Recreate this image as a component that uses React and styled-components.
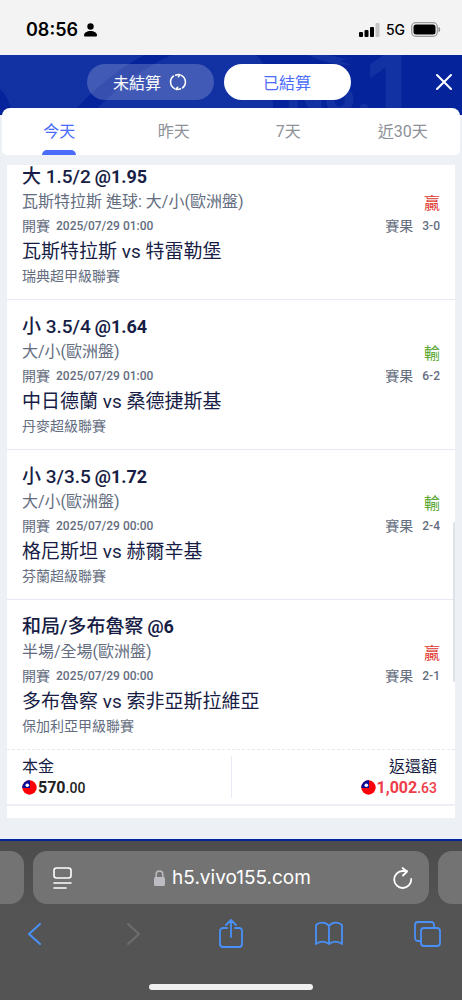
import { useState } from "react";
import styled, { createGlobalStyle } from "styled-components";

const GlobalStyle = createGlobalStyle`
  * {
    box-sizing: border-box;
  }
  body {
    margin: 0;
    background: #545454;
    font-family: Roboto, "Noto Sans CJK TC", sans-serif;
    color: #171d45;
  }
  button {
    border: none;
    padding: 0;
    background: none;
    font-family: inherit;
    cursor: pointer;
  }
`;

const Page = styled.div`
  display: flex;
  flex-direction: column;
  min-height: 100vh;
`;

const StatusBar = styled.div`
  display: flex;
  justify-content: space-between;
  align-items: center;
  height: 55px;
  padding: 4px 21px 0 26px;
  background: #f3f3f3;
  color: #000;
  font-family: Inter, sans-serif;
`;

const Clock = styled.div`
  display: flex;
  align-items: center;
  gap: 6px;
  font-size: 18px;
  font-weight: 600;
`;

const Signal = styled.div`
  display: flex;
  align-items: center;
  gap: 6px;
  font-size: 14px;
  font-weight: 500;
`;

const Main = styled.main`
  background: #edf1f5;
  border-bottom: 2px solid #05249b;
`;

const Header = styled.header`
  position: relative;
  display: flex;
  align-items: center;
  height: 60px;
  padding: 0 9px 7px 2px;
  background: #05249b;
  overflow: hidden;
`;

const HeaderArt = styled.svg`
  position: absolute;
  top: 0;
  left: 0;
  width: 100%;
  height: 100%;
`;

const Pills = styled.div`
  position: relative;
  flex: 1;
  display: flex;
  justify-content: center;
  gap: 10px;
`;

const Pill = styled.button`
  display: flex;
  align-items: center;
  justify-content: center;
  gap: 8px;
  width: 127px;
  height: 36px;
  border-radius: 18px;
  font-size: 16px;
  color: ${({ $active }) => ($active ? "#4a6cfa" : "#fff")};
  background: ${({ $active }) => ($active ? "#fff" : "rgba(255, 255, 255, 0.2)")};
`;

const CloseButton = styled.button`
  position: relative;
  display: flex;
  color: #fff;
`;

const Tabs = styled.nav`
  position: relative;
  display: grid;
  grid-template-columns: repeat(4, 1fr);
  height: 47px;
  margin: -7px 2px 10px;
  border-radius: 8px 8px 5px 5px;
  background: #fff;
`;

const Tab = styled.button`
  display: flex;
  flex-direction: column;
  align-items: center;
  justify-content: space-between;
  padding-top: 12px;
  font-size: 16px;
  line-height: 24px;
  color: ${({ $active }) => ($active ? "#4a6cfa" : "#8d9198")};

  &::after {
    content: "";
    width: 34px;
    height: 5px;
    border-radius: 5px 5px 0 0;
    background: ${({ $active }) => ($active ? "#4a6cfa" : "transparent")};
  }
`;

const Panel = styled.section`
  position: relative;
  margin: 0 7px 21px;
  padding-bottom: 12px;
  background: #fff;
  overflow: hidden;
`;

const ScrollThumb = styled.div`
  position: absolute;
  top: 357px;
  right: 0;
  width: 2px;
  height: 160px;
  border-radius: 1px;
  background: #dfe3e9;
`;

// the list is scrolled, so the first bet starts above the panel edge
const BetList = styled.ul`
  margin: -15px 0 0;
  padding: 0;
  list-style: none;
`;

const Bet = styled.li`
  padding: 14px 15px 10px;
  border-bottom: 1px solid #e6e9f2;

  &:last-child {
    border-bottom: 1px dashed #e6e9f2;
  }
`;

const Line = styled.div`
  display: flex;
  justify-content: space-between;
  height: 25px;
  line-height: 25px;
  white-space: nowrap;
`;

const Pick = styled(Line)`
  justify-content: flex-start;
  gap: 4px;
  font-size: 19px;
  font-weight: 500;

  strong {
    font-size: 18px;
    font-weight: 700;
  }
`;

const Market = styled(Line)`
  font-size: 16px;
  color: #646d80;
`;

const Outcome = styled.span`
  padding-top: 2px;
  color: ${({ $won }) => ($won ? "#e0382f" : "#5aa832")};
`;

const Detail = styled(Line)`
  font-size: 14px;
  color: #646d80;
`;

const Field = styled.span`
  display: flex;
  gap: ${({ $wide }) => ($wide ? "9px" : "6px")};

  b {
    font-size: 12px;
    font-weight: 500;
  }
`;

const Match = styled(Line)`
  font-size: 19px;
`;

const League = styled(Line)`
  font-size: 14px;
  color: #646d80;
`;

const Totals = styled.div`
  display: grid;
  grid-template-columns: 1fr 1fr;
  padding: 6px 0;
  border-bottom: 2px solid #eeeff6;
`;

const Total = styled.div`
  display: flex;
  flex-direction: column;
  align-items: ${({ $end }) => ($end ? "flex-end" : "flex-start")};
  padding: 0 ${({ $end }) => ($end ? "18px" : "15px")};
  font-size: 16px;
  line-height: 21px;

  & + & {
    border-left: 1px solid #e9ebf4;
  }
`;

const Amount = styled.div`
  display: flex;
  align-items: center;
  gap: 1px;
  height: 21px;
  font-weight: 700;
  color: ${({ $red }) => ($red ? "#ee3c48" : "#222")};

  small {
    font-size: 14px;
    font-weight: 500;
  }
`;

const BrowserBar = styled.footer`
  flex: 1;
  display: flex;
  flex-direction: column;
  padding-top: 10px;
  background: linear-gradient(#4c4c4c, #545454 70px);
`;

const AddressRow = styled.div`
  display: flex;
  gap: 9px;
  height: 53px;
`;

const Stub = styled.div`
  width: 24px;
  background: #737373;
  border-radius: ${({ $right }) => ($right ? "14px 0 0 14px" : "0 14px 14px 0")};
`;

const Address = styled.div`
  flex: 1;
  display: flex;
  align-items: center;
  justify-content: space-between;
  padding: 0 16px 0 20px;
  border-radius: 14px;
  background: #737373;
  color: #fff;
`;

const Host = styled.div`
  display: flex;
  align-items: center;
  gap: 7px;
  font-family: Inter, sans-serif;
  font-size: 19px;
`;

const ReloadButton = styled.button`
  display: flex;
  color: #fff;
`;

const Toolbar = styled.div`
  display: flex;
  justify-content: space-between;
  padding: 14px 21px 0;
`;

const ToolButton = styled.button`
  display: flex;
  justify-content: center;
  width: 28px;
  height: 32px;
  color: ${({ disabled }) => (disabled ? "#6d6d6d" : "#4990f8")};
`;

const HomeIndicator = styled.div`
  width: 164px;
  height: 6px;
  margin: auto auto 10px;
  border-radius: 3px;
  background: #f0f0f0;
`;

const Stroke = ({ w, h, width = 2, children }) => (
  <svg
    width={w}
    height={h}
    viewBox={`0 0 ${w} ${h}`}
    fill="none"
    stroke="currentColor"
    strokeWidth={width}
    strokeLinecap="round"
    strokeLinejoin="round"
    aria-hidden="true"
  >
    {children}
  </svg>
);

const Flag = () => (
  <svg width="15" height="15" viewBox="0 0 15 15" aria-hidden="true">
    <circle cx="7.5" cy="7.5" r="7.2" fill="#fb0007" />
    <path d="M8 .3v7.7H.3A7.2 7.2 0 0 1 8 .3z" fill="#0a0a96" />
    <circle cx="5.3" cy="5.3" r="1.8" fill="#fff" />
  </svg>
);

const bets = [
  {
    pick: "大 1.5/2",
    odds: "@1.95",
    market: "瓦斯特拉斯 進球: 大/小(歐洲盤)",
    won: true,
    time: "2025/07/29 01:00",
    score: "3-0",
    match: "瓦斯特拉斯 vs 特雷勒堡",
    league: "瑞典超甲級聯賽",
  },
  {
    pick: "小 3.5/4",
    odds: "@1.64",
    market: "大/小(歐洲盤)",
    won: false,
    time: "2025/07/29 01:00",
    score: "6-2",
    match: "中日德蘭 vs 桑德捷斯基",
    league: "丹麥超級聯賽",
  },
  {
    pick: "小 3/3.5",
    odds: "@1.72",
    market: "大/小(歐洲盤)",
    won: false,
    time: "2025/07/29 00:00",
    score: "2-4",
    match: "格尼斯坦 vs 赫爾辛基",
    league: "芬蘭超級聯賽",
  },
  {
    pick: "和局/多布魯察",
    odds: "@6",
    market: "半場/全場(歐洲盤)",
    won: true,
    time: "2025/07/29 00:00",
    score: "2-1",
    match: "多布魯察 vs 索非亞斯拉維亞",
    league: "保加利亞甲級聯賽",
  },
];

const days = ["今天", "昨天", "7天", "近30天"];

const App = () => {
  const [day, setDay] = useState("今天");
  const [settled, setSettled] = useState(true);

  return (
    <Page>
      <GlobalStyle />
      <StatusBar>
        <Clock>
          08:56
          <svg width="13" height="14" viewBox="0 0 13 14" aria-hidden="true">
            <circle cx="6.5" cy="3.5" r="3.2" />
            <path d="M0 12.5C0 9.5 3 8 6.5 8S13 9.5 13 12.5Q13 13.5 12 13.5H1Q0 13.5 0 12.5z" />
          </svg>
        </Clock>
        <Signal>
          <svg width="21" height="14" viewBox="0 0 21 14" aria-hidden="true">
            <rect x="0" y="9" width="4" height="5" rx="1" />
            <rect x="5.5" y="7" width="4" height="7" rx="1" />
            <rect x="11" y="4" width="4" height="10" rx="1" />
            <rect x="16.5" y="0" width="4" height="14" rx="1" fill="#c4c4c4" />
          </svg>
          5G
          <svg width="30" height="15" viewBox="0 0 30 15" aria-hidden="true">
            <rect x=".7" y=".7" width="25.6" height="13.6" rx="4" fill="none" stroke="#9b9b9b" strokeWidth="1.3" />
            <rect x="2.5" y="2.5" width="22" height="10" rx="2.5" />
            <path d="M28 5.5q1.5 2 0 4z" fill="#8a8a8a" stroke="#8a8a8a" />
          </svg>
        </Signal>
      </StatusBar>

      <Main>
        <Header>
          <HeaderArt viewBox="0 0 462 60" preserveAspectRatio="xMinYMin slice" aria-hidden="true">
            <path d="M0 0H256C268 10 268 22 262 30C272 36 275 45 272 60H0z" fill="#1231a3" />
            <path d="M144 0C116 15 92 36 70 60H92C112 36 140 14 172 0z" fill="#05249b" />
            <path d="M0 34Q9 41 12 60H0z" fill="#05249b" />
            <path d="M308 0Q326 10 352 10L340 6L364 0L346 4L330 0z" fill="#1231a3" />
            <g fill="#1231a3" fontFamily="Inter, sans-serif" fontWeight="800">
              <text x="286" y="58" fontSize="50">No.</text>
              <text x="366" y="66" fontSize="92">1</text>
            </g>
          </HeaderArt>
          <Pills>
            <Pill $active={!settled} onClick={() => setSettled(false)}>
              未結算
              <Stroke w={18} h={18} width={1.6}>
                <path d="M5.6 15.6A7.4 7.4 0 0 1 4.4 3.2M12.4 2.4A7.4 7.4 0 0 1 13.6 14.8" />
                <path d="M6.6 2.2Q9 1 11 1.8L9.4 3.6M11.4 15.8Q9 17 7 16.2L8.6 14.4" />
              </Stroke>
            </Pill>
            <Pill $active={settled} onClick={() => setSettled(true)}>
              已結算
            </Pill>
          </Pills>
          <CloseButton aria-label="關閉">
            <Stroke w={18} h={18}>
              <path d="M2 2l14 14M16 2L2 16" />
            </Stroke>
          </CloseButton>
        </Header>

        <Tabs>
          {days.map((d) => (
            <Tab key={d} $active={d === day} onClick={() => setDay(d)}>
              {d}
            </Tab>
          ))}
        </Tabs>

        <Panel>
          <BetList>
            {bets.map((bet) => (
              <Bet key={bet.match}>
                <Pick>
                  {bet.pick} <strong>{bet.odds}</strong>
                </Pick>
                <Market>
                  {bet.market}
                  <Outcome $won={bet.won}>{bet.won ? "贏" : "輸"}</Outcome>
                </Market>
                <Detail>
                  <Field>
                    開賽 <b>{bet.time}</b>
                  </Field>
                  <Field $wide>
                    賽果 <b>{bet.score}</b>
                  </Field>
                </Detail>
                <Match>{bet.match}</Match>
                <League>{bet.league}</League>
              </Bet>
            ))}
          </BetList>
          <Totals>
            <Total>
              本金
              <Amount>
                <Flag />
                <span>
                  570<small>.00</small>
                </span>
              </Amount>
            </Total>
            <Total $end>
              返還額
              <Amount $red>
                <Flag />
                <span>
                  1,002<small>.63</small>
                </span>
              </Amount>
            </Total>
          </Totals>
          <ScrollThumb />
        </Panel>
      </Main>

      <BrowserBar>
        <AddressRow>
          <Stub />
          <Address>
            <Stroke w={19} h={22} width={1.6}>
              <rect x="1" y="1" width="17" height="10" rx="2.5" />
              <path d="M1 16h17M1 21h12" />
            </Stroke>
            <Host>
              <svg width="11" height="16" viewBox="0 0 11 16" aria-hidden="true">
                <rect y="7" width="11" height="9" rx="1.5" fill="#bdbcc2" />
                <path d="M2.2 8V4.3a3.3 3.3 0 0 1 6.6 0V8" fill="none" stroke="#bdbcc2" strokeWidth="1.5" />
              </svg>
              h5.vivo155.com
            </Host>
            <ReloadButton aria-label="重新載入">
              <Stroke w={20} h={22} width={1.8}>
                <path d="M18.2 12A8.5 8.5 0 1 1 9.7 4H14M9.5 1l4.5 3.5-4 4" />
              </Stroke>
            </ReloadButton>
          </Address>
          <Stub $right />
        </AddressRow>
        <Toolbar>
          <ToolButton aria-label="上一頁">
            <Stroke w={14} h={32}>
              <path d="M12 6L1 16l11 10" />
            </Stroke>
          </ToolButton>
          <ToolButton aria-label="下一頁" disabled>
            <Stroke w={14} h={32}>
              <path d="M2 6l11 10L2 26" />
            </Stroke>
          </ToolButton>
          <ToolButton aria-label="分享">
            <Stroke w={26} h={32} width={1.8}>
              <path d="M9 10H5a3 3 0 0 0-3 3v13a3 3 0 0 0 3 3h16a3 3 0 0 0 3-3V13a3 3 0 0 0-3-3h-4M13 19V2M8 7l5-5 5 5" />
            </Stroke>
          </ToolButton>
          <ToolButton aria-label="書籤">
            <Stroke w={28} h={32} width={1.8}>
              <path d="M14 8C10.5 3.5 4 4 1 7v19c4-3 9-3 13 0 4-3 9-3 13 0V7c-3-3-9.5-3.5-13 1zv18" />
            </Stroke>
          </ToolButton>
          <ToolButton aria-label="分頁">
            <Stroke w={28} h={32} width={1.8}>
              <rect x="8" y="10" width="19" height="18" rx="3" />
              <path d="M8 23H5a3 3 0 0 1-3-3V7a3 3 0 0 1 3-3h13a3 3 0 0 1 3 3v3" />
            </Stroke>
          </ToolButton>
        </Toolbar>
        <HomeIndicator />
      </BrowserBar>
    </Page>
  );
};

export default App;
